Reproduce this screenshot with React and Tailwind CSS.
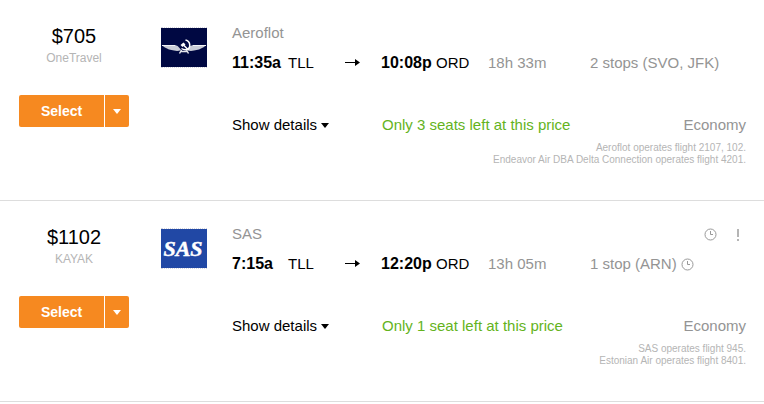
import React, { useState } from "react";

const FLIGHTS = [
  {
    id: "aeroflot",
    price: "$705",
    provider: "OneTravel",
    airline: "Aeroflot",
    logo: AeroflotLogo,
    depart: { time: "11:35a", code: "TLL" },
    arrive: { time: "10:08p", code: "ORD" },
    duration: "18h 33m",
    stops: "2 stops (SVO, JFK)",
    seats: "Only 3 seats left at this price",
    cabin: "Economy",
    operators: [
      "Aeroflot operates flight 2107, 102.",
      "Endeavor Air DBA Delta Connection operates flight 4201."
    ]
  },
  {
    id: "sas",
    price: "$1102",
    provider: "KAYAK",
    airline: "SAS",
    logo: SasLogo,
    depart: { time: "7:15a", code: "TLL" },
    arrive: { time: "12:20p", code: "ORD" },
    duration: "13h 05m",
    stops: "1 stop (ARN)",
    longLayover: true,
    seats: "Only 1 seat left at this price",
    cabin: "Economy",
    operators: [
      "SAS operates flight 945.",
      "Estonian Air operates flight 8401."
    ]
  }
];

function AeroflotLogo() {
  return (
    <svg width="46" height="39" viewBox="0 0 46 39" className="block bg-[#000842]" aria-hidden="true">
      {/* Wings */}
      <path d="M1 17 H14 Q17 17.5 18.5 20 L20 22 Q17 23.5 13 22.5 L8 21.5 L3 19 Z" fill="#c9ccd6" />
      <path d="M45 17 H32 Q29 17.5 27.5 20 L26 22 Q29 23.5 33 22.5 L38 21.5 L43 19 Z" fill="#c9ccd6" />
      <path d="M1 17.5 H14 M45 17.5 H32" stroke="#f2f2f6" fill="none" />
      {/* Hammer and sickle */}
      <path d="M24.5 12 C30 13.5 30 20.5 25.5 21.5 C23.5 22 22 21.5 20.5 20.5" stroke="#fff" strokeWidth="1.5" fill="none" />
      <path d="M19.5 17 L22.5 14.5 L24.5 16.5 L21.5 19 Z" fill="#fff" />
      <path d="M22.5 17 L27.5 22" stroke="#fff" strokeWidth="1.5" />
      <path d="M20.5 22 L18.5 25.5 M25.5 22 L27.5 25.5 M19.5 23.5 H26.5" stroke="#e4e5ec" strokeWidth="1.5" fill="none" />
    </svg>
  );
}

function SasLogo() {
  return (
    <svg width="46" height="39" viewBox="0 0 46 39" className="block bg-[#2148a5]" aria-hidden="true">
      <text
        x="22"
        y="27"
        textAnchor="middle"
        fill="#fff"
        stroke="#fff"
        strokeWidth="0.5"
        className="font-['Liberation_Serif',serif] text-[22px] font-bold italic"
      >
        SAS
      </text>
    </svg>
  );
}

function Caret() {
  return (
    <svg width="8" height="5" viewBox="0 0 8 5" fill="currentColor" aria-hidden="true">
      <path d="M0 0 H8 L4 5 Z" />
    </svg>
  );
}

function Arrow() {
  return (
    <svg width="15" height="8" viewBox="0 0 15 8" fill="currentColor" aria-hidden="true">
      <path d="M0 3 H10 V0 L15 3.5 L10 7 V4 H0 Z" />
    </svg>
  );
}

function Clock() {
  return (
    <svg width="13" height="13" viewBox="0 0 13 13" fill="none" stroke="#999" aria-hidden="true">
      <circle cx="6.5" cy="6.5" r="5.5" />
      <path d="M6.5 3 V6.5 H9" />
    </svg>
  );
}

function Alert() {
  return (
    <svg width="2" height="13" viewBox="0 0 2 13" fill="#b5b5b5" aria-hidden="true">
      <path d="M0 1 H2 V9 H0 Z M0 11 H2 V13 H0 Z" />
    </svg>
  );
}

function FlightRow({ flight }) {
  const [open, setOpen] = useState(false);
  const Logo = flight.logo;

  return (
    <li className="flex border-b border-[#ddd] pt-6 pr-[18px] pb-[34px] pl-[19px]">
      {/* Price and booking */}
      <div className="w-[110px] shrink-0 text-center">
        <div className="text-[20px] leading-6 text-black">{flight.price}</div>
        <div className="text-[12px] leading-5 text-[#b5b5b5]">{flight.provider}</div>
        <div className="mt-[27px] flex h-8 gap-px text-white">
          <button className="flex-1 rounded-l-xs bg-[#f68920] text-[14px] font-bold">Select</button>
          <button className="flex w-6 items-center justify-center rounded-r-xs bg-[#f68920]" aria-label="More booking options">
            <Caret />
          </button>
        </div>
      </div>

      <div className="ml-8 mt-[3px] w-[46px] shrink-0 self-start border-y border-dotted border-[#d5d5de]">
        <Logo />
      </div>

      {/* Itinerary */}
      <div className="ml-[25px] min-w-0 flex-1 text-[15px] leading-[18px]">
        <div className="flex items-center justify-between">
          <h2 className="text-[#949494]">{flight.airline}</h2>
          {flight.longLayover && (
            <div className="flex items-center gap-5 pr-[7px]">
              <Clock />
              <Alert />
            </div>
          )}
        </div>

        <div className="mt-3 grid grid-cols-[56px_57px_36px_55px_52px_102px_1fr] items-center whitespace-nowrap text-black">
          <span className="text-[16px] font-bold">{flight.depart.time}</span>
          <span>{flight.depart.code}</span>
          <Arrow />
          <span className="text-[16px] font-bold">{flight.arrive.time}</span>
          <span>{flight.arrive.code}</span>
          <span className="text-[#949494]">{flight.duration}</span>
          <span className="flex items-center gap-1 text-[#949494]">
            {flight.stops}
            {flight.longLayover && <Clock />}
          </span>
        </div>

        <div className="mt-11 flex items-center whitespace-nowrap">
          <button
            className="flex w-[150px] items-center gap-1 text-black"
            aria-expanded={open}
            onClick={() => setOpen(!open)}
          >
            Show details
            <Caret />
          </button>
          <span className="text-[#64b31c]">{flight.seats}</span>
          <span className="ml-auto text-[#949494]">{flight.cabin}</span>
        </div>

        <div className="mt-2 text-right text-[10px] leading-3 text-[#b5b5b5]">
          {flight.operators.map((line) => (
            <p key={line}>{line}</p>
          ))}
        </div>
      </div>
    </li>
  );
}

export default function App() {
  return (
    <ul className="min-h-screen bg-white font-['Liberation_Sans',Arial,sans-serif]">
      {FLIGHTS.map((flight) => (
        <FlightRow key={flight.id} flight={flight} />
      ))}
    </ul>
  );
}
